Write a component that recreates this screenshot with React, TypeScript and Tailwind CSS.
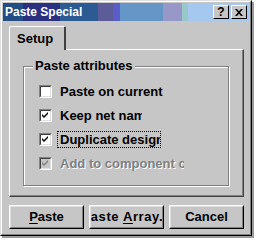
import React from 'react';

const font = { fontFamily: '"Liberation Sans", Arial, sans-serif' };

const titleBg =
  'bg-[linear-gradient(90deg,#234d85_0px,#234d85_20px,#2b2f80_20px,#2b2f80_57px,#2b5b92_57px,#2b5b92_95px,#5c5c98_95px,#5c5c98_110px,#5c5cc8_110px,#5c5cc8_117px,#6496c8_117px,#6496c8_160px,#9898c8_160px,#9898c8_179px,#98c8c8_179px,#98c8c8_185px,#a4c8f0_185px)]';

const CheckBox: React.FC<{ checked: boolean; disabled?: boolean }> = ({ checked, disabled }) => (
  <div className="w-[13px] h-[13px] shrink-0 border border-t-[#808080] border-l-[#808080] border-r-white border-b-white">
    <div
      className={`w-full h-full border border-t-[#404040] border-l-[#404040] border-r-[#dfdfdf] border-b-[#dfdfdf] flex items-center justify-center ${
        disabled ? 'bg-[#c6c6c6]' : 'bg-white'
      }`}
    >
      {checked && (
        <svg width="7" height="7" viewBox="0 0 7 7">
          <path d="M0 2 L2 4 L6 0 L6 2 L2 6 L0 4 Z" fill={disabled ? '#808080' : '#000'} />
        </svg>
      )}
    </div>
  </div>
);

interface RowProps {
  label: string;
  checked: boolean;
  width: string;
  disabled?: boolean;
  focused?: boolean;
}

const Row: React.FC<RowProps> = ({ label, checked, width, disabled, focused }) => (
  <div className="h-[24px] flex items-center pl-[15px] gap-[5px]">
    <CheckBox checked={checked} disabled={disabled} />
    <div
      className={`${width} overflow-hidden whitespace-nowrap px-[2px] leading-[15px] border border-dotted ${
        focused ? 'border-black' : 'border-transparent'
      } ${disabled ? 'text-[#808080] [text-shadow:1px_1px_0_#ffffff]' : 'text-black'}`}
    >
      {label}
    </div>
  </div>
);

const Btn: React.FC<{ children: React.ReactNode }> = ({ children }) => (
  <div className="w-[75px] h-[24px] border border-t-white border-l-white border-r-black border-b-black">
    <div className="w-full h-full border border-t-[#dfdfdf] border-l-[#dfdfdf] border-r-[#808080] border-b-[#808080] flex items-center justify-center overflow-hidden whitespace-nowrap text-[13px] font-bold text-black">
      {children}
    </div>
  </div>
);

const App: React.FC = () => {
  return (
    <div className="w-[256px] h-[240px] bg-white overflow-hidden" style={font}>
      <div className="w-[252px] h-[236px] border border-t-[#dfdfdf] border-l-[#dfdfdf] border-r-black border-b-black shadow-[2px_2px_0_#9a9a9a]">
        <div className="w-full h-full border border-t-white border-l-white border-r-[#808080] border-b-[#808080] bg-[#c6c6c6] p-[1px] flex flex-col">
          <div className={`h-[18px] flex items-center justify-between pl-[2px] pr-[2px] ${titleBg}`}>
            <span className="text-white font-bold text-[12px] leading-none">Paste Special</span>
            <div className="flex gap-[2px]">
              <div className="w-[16px] h-[14px] bg-[#c6c6c6] border border-t-white border-l-white border-r-black border-b-black flex items-center justify-center text-[12px] font-bold leading-none">
                ?
              </div>
              <div className="w-[16px] h-[14px] bg-[#c6c6c6] border border-t-white border-l-white border-r-black border-b-black flex items-center justify-center">
                <svg width="8" height="7" viewBox="0 0 8 7">
                  <path d="M0 0h2l2 2.2L6 0h2L5 3.5 8 7H6L4 4.8 2 7H0l3-3.5z" fill="#000" />
                </svg>
              </div>
            </div>
          </div>

          <div className="pl-[6px] pr-[5px] pt-[5px] flex flex-col">
            <div className="flex">
              <div className="w-[57px] h-[24px] -mb-[1px] z-10 bg-[#c6c6c6] border-t border-l border-t-white border-l-white border-r-2 border-r-[#404040] rounded-tl-[2px] rounded-tr-[2px] flex items-center pl-[7px] text-[13px] font-bold">
                Setup
              </div>
            </div>
            <div className="h-[148px] border border-t-white border-l-white border-r-[#404040] border-b-[#404040]">
              <div className="h-full border-r border-b border-r-[#808080] border-b-[#808080] pt-[16px] pl-[13px] pr-[13px]">
                <div className="relative h-[120px] border border-[#808080] shadow-[1px_1px_0_#ffffff,inset_1px_1px_0_#ffffff] pt-[12px] text-[13px] font-bold">
                  <span className="absolute left-[9px] -top-[9px] px-[2px] bg-[#c6c6c6] leading-[16px]">Paste attributes</span>
                  <Row label="Paste on current" checked={false} width="w-[112px]" />
                  <Row label="Keep net names" checked width="w-[86px]" />
                  <Row label="Duplicate designators" checked width="w-[104px]" focused />
                  <Row label="Add to component class" checked disabled width="w-[128px]" />
                </div>
              </div>
            </div>
          </div>

          <div className="flex gap-[5px] pl-[6px] pt-[8px]">
            <Btn>
              <span className="underline underline-offset-2">P</span>aste
            </Btn>
            <Btn>
              <span className="tracking-[0.6px]">
                <span className="underline underline-offset-2">P</span>aste <span className="underline underline-offset-2">A</span>rray...
              </span>
            </Btn>
            <Btn>Cancel</Btn>
          </div>
        </div>
      </div>
    </div>
  );
};

export default App;
